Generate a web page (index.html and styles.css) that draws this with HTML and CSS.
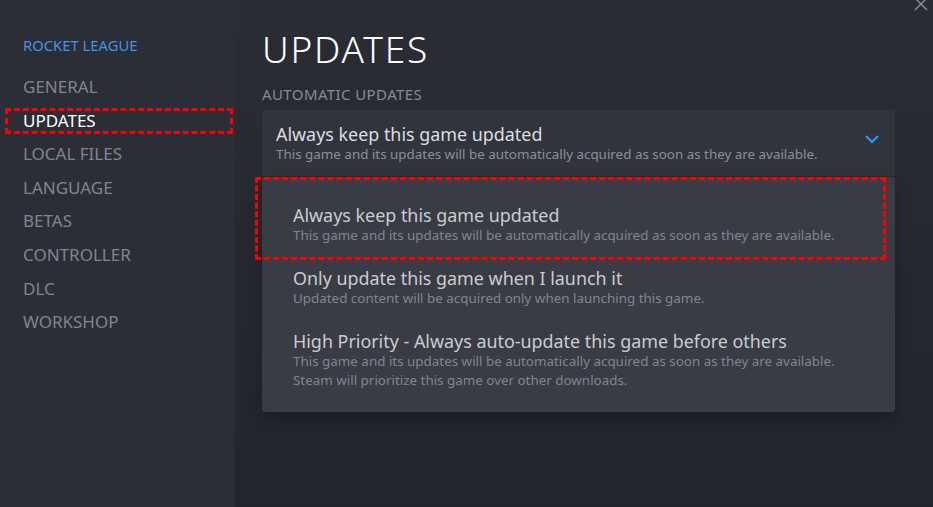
FILE: index.html
```html
<!DOCTYPE html>
<html lang="en">

<head>
    <meta charset="UTF-8">
    <meta name="viewport" content="width=device-width, initial-scale=1.0">
    <title>Rocket League - Properties</title>
    <link rel="stylesheet" href="styles.css">
</head>

<body>
    <div class="window">
        <aside class="sidebar">
            <div class="game-name">ROCKET LEAGUE</div>
            <ul class="nav">
                <li>GENERAL</li>
                <li class="active">UPDATES<span class="mark"></span></li>
                <li>LOCAL FILES</li>
                <li>LANGUAGE</li>
                <li>BETAS</li>
                <li>CONTROLLER</li>
                <li>DLC</li>
                <li>WORKSHOP</li>
            </ul>
        </aside>

        <main class="content">
            <h1>UPDATES</h1>
            <div class="section-label">AUTOMATIC UPDATES</div>

            <div class="dropdown">
                <div class="dropdown-head">
                    <div>
                        <div class="opt-title">Always keep this game updated</div>
                        <div class="opt-desc">This game and its updates will be automatically acquired as soon as they are available.</div>
                    </div>
                    <svg class="chevron" width="16" height="10" viewBox="0 0 16 10">
                        <path d="M2 2 L8 8 L14 2" fill="none" stroke="#1a9fff" stroke-width="2.2" />
                    </svg>
                </div>

                <ul class="menu">
                    <li class="option">
                        <div class="opt-title">Always keep this game updated</div>
                        <div class="opt-desc">This game and its updates will be automatically acquired as soon as they are available.</div>
                        <span class="mark"></span>
                    </li>
                    <li class="option">
                        <div class="opt-title">Only update this game when I launch it</div>
                        <div class="opt-desc">Updated content will be acquired only when launching this game.</div>
                    </li>
                    <li class="option">
                        <div class="opt-title">High Priority - Always auto-update this game before others</div>
                        <div class="opt-desc">This game and its updates will be automatically acquired as soon as they are available.<br>Steam will prioritize this game over other downloads.</div>
                    </li>
                </ul>
            </div>
        </main>

        <svg class="close" width="14" height="14" viewBox="0 0 14 14">
            <path d="M1 1 L13 13 M13 1 L1 13" stroke="#8a8f97" stroke-width="1.4" />
        </svg>
    </div>
</body>

</html>
```

FILE: styles.css
```css
body {
    margin: 0;
    padding: 0;
    font-family: "Noto Sans", "Open Sans", Arial, sans-serif;
    background: #24272d;
}

.window {
    position: relative;
    display: flex;
    width: 933px;
    height: 507px;
    overflow: hidden;
}

.sidebar {
    width: 235px;
    flex-shrink: 0;
    background: #2b2e36;
    padding-top: 36px;
    box-sizing: border-box;
}

.game-name {
    padding-left: 23px;
    font-size: 14.8px;
    line-height: 18px;
    color: #4593e2;
    margin-bottom: 16px;
}

.nav {
    list-style-type: none;
    margin: 0;
    padding: 0;
}

.nav li {
    position: relative;
    padding-left: 23px;
    font-size: 17px;
    line-height: 33.6px;
    color: #80868e;
}

.nav li.active {
    color: #ffffff;
}

.nav li.active .mark {
    top: 4px;
    left: 5px;
    right: 2px;
    bottom: 3px;
}

.mark {
    position: absolute;
    border: 3px dashed #ff0000;
    border-radius: 2px;
    pointer-events: none;
}

.content {
    flex: 1;
    padding: 26px 38px 0 27px;
    background: linear-gradient(180deg, #2a2d34 0%, #25282e 55%, #22252b 100%);
}

h1 {
    margin: 0;
    font-size: 37px;
    font-weight: 300;
    letter-spacing: 1.8px;
    line-height: 46px;
    color: #ffffff;
}

.section-label {
    margin-top: 13px;
    font-size: 15px;
    letter-spacing: 0.4px;
    line-height: 18px;
    color: #868c94;
}

.dropdown {
    position: relative;
    margin-top: 7px;
}

.dropdown-head {
    display: flex;
    justify-content: space-between;
    align-items: flex-start;
    height: 66px;
    padding: 13px 14px 0 14px;
    box-sizing: border-box;
    background: #31343c;
    border-radius: 2px;
}

.chevron {
    margin-top: 11px;
    margin-right: 1px;
}

.opt-title {
    font-size: 17.9px;
    line-height: 22px;
    color: #dcdee1;
}

.opt-desc {
    font-size: 13.4px;
    line-height: 19px;
    color: #8a9098;
}

.menu {
    position: absolute;
    top: 67px;
    left: 0;
    right: 0;
    list-style-type: none;
    margin: 0;
    padding: 16px 0 11px 0;
    background: #393c45;
    border-radius: 3px;
    box-shadow: 0 8px 16px rgba(0, 0, 0, 0.25);
}

.option {
    position: relative;
    padding: 11px 20px 11px 31px;
}

.option .opt-title {
    color: #c9ccd1;
}

.option .opt-desc {
    color: #81868e;
}

.option .mark {
    top: -16px;
    left: -7px;
    right: 9px;
    bottom: -4px;
}

.close {
    position: absolute;
    top: -3px;
    right: 5px;
}
```
